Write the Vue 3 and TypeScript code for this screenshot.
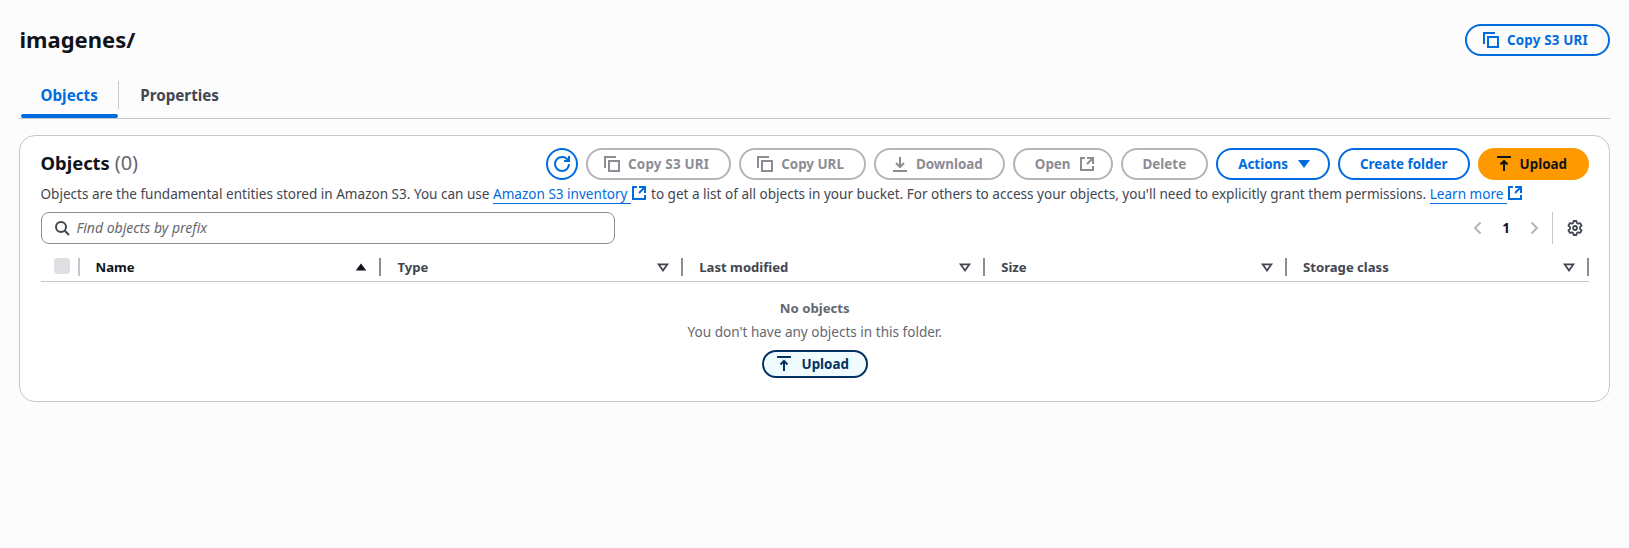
<template>
  <div class="page">
    <header class="page-head">
      <h1 class="title">imagenes/</h1>
      <button class="btn btn-normal btn-uri">
        <svg class="icon" viewBox="0 0 16 16"><path d="M1 12V1h11" /><path d="M5 5h10v10H5z" /></svg>
        Copy S3 URI
      </button>
    </header>

    <nav class="tabs">
      <div class="tab active"><span>Objects</span></div>
      <div class="tab"><span>Properties</span></div>
    </nav>

    <section class="card">
      <div class="card-head">
        <h2 class="card-title">Objects <span class="count">(0)</span></h2>
        <div class="actions">
          <button class="btn-round" aria-label="Refresh">
            <svg class="icon" viewBox="0 0 16 16">
              <path d="M10 5h5V0" />
              <path d="M15 8a6.96 6.96 0 0 1-7 7 6.96 6.96 0 0 1-7-7 6.96 6.96 0 0 1 7-7 6.87 6.87 0 0 1 6.3 4" />
            </svg>
          </button>
          <button class="btn btn-disabled btn-uri">
            <svg class="icon" viewBox="0 0 16 16"><path d="M1 12V1h11" /><path d="M5 5h10v10H5z" /></svg>
            Copy S3 URI
          </button>
          <button class="btn btn-disabled">
            <svg class="icon" viewBox="0 0 16 16"><path d="M1 12V1h11" /><path d="M5 5h10v10H5z" /></svg>
            Copy URL
          </button>
          <button class="btn btn-disabled">
            <svg class="icon" viewBox="0 0 16 16"><path d="M1 15h14" /><path d="M8 1v10" /><path d="m4 7 4 4 4-4" /></svg>
            Download
          </button>
          <button class="btn btn-disabled icon-right">
            Open
            <svg class="icon" viewBox="0 0 16 16">
              <path d="M14 8V2H8" /><path d="M14 2 8 8" /><path d="M6 2H2v12h12v-4" />
            </svg>
          </button>
          <button class="btn btn-disabled text-only">Delete</button>
          <button class="btn btn-normal icon-right">
            Actions
            <svg class="caret" viewBox="0 0 16 16"><path d="M2 4h12l-6 8z" /></svg>
          </button>
          <button class="btn btn-normal text-only">Create folder</button>
          <button class="btn btn-primary">
            <svg class="icon" viewBox="0 0 16 16"><path d="M1 1h14" /><path d="M8 15V5" /><path d="m4.500 8.500 3.500-3.500 3.500 3.500" /></svg>
            Upload
          </button>
        </div>
      </div>

      <p class="desc">
        Objects are the fundamental entities stored in Amazon S3. You can use
        <a class="link">Amazon S3 inventory</a>
        <svg class="icon ext" viewBox="0 0 16 16">
          <path d="M14 8V2H8" /><path d="M14 2 8 8" /><path d="M6 2H2v12h12v-4" />
        </svg>
        to get a list of all objects in your bucket. For others to access your objects, you'll need to explicitly grant them permissions.
        <a class="link">Learn more</a>
        <svg class="icon ext" viewBox="0 0 16 16">
          <path d="M14 8V2H8" /><path d="M14 2 8 8" /><path d="M6 2H2v12h12v-4" />
        </svg>
      </p>

      <div class="tools">
        <div class="search">
          <svg class="icon" viewBox="0 0 16 16"><circle cx="7" cy="7" r="5" /><path d="m15 15-4.500-4.500" /></svg>
          <span>Find objects by prefix</span>
        </div>
        <div class="pager">
          <svg class="icon" viewBox="0 0 16 16"><path d="m10.500 2.500-5.500 5.500 5.500 5.500" /></svg>
          <span class="page-num">1</span>
          <svg class="icon" viewBox="0 0 16 16"><path d="m5.500 2.500 5.500 5.500-5.500 5.500" /></svg>
        </div>
        <div class="prefs">
          <svg class="icon gear" viewBox="0 0 16 16">
            <circle cx="8" cy="8" r="2" />
            <path d="M6.600 1h2.800l.5 2 1.300.7 2-.6 1.400 2.500-1.500 1.400v2l1.500 1.400-1.400 2.500-2-.6-1.300.7-.5 2H6.600l-.5-2-1.300-.7-2 .6-1.400-2.500L2.900 9V7L1.400 5.600l1.400-2.500 2 .6 1.300-.7z" />
          </svg>
        </div>
      </div>

      <div class="table-head">
        <div class="check-col"><span class="checkbox"></span></div>
        <div v-for="col in columns" :key="col.label" class="col" :class="{ sorted: col.sorted }">
          <span>{{ col.label }}</span>
          <svg v-if="col.sorted" class="sort filled" viewBox="0 0 16 16"><path d="M2 12h12L8 4z" /></svg>
          <svg v-else class="sort" viewBox="0 0 16 16"><path d="M3 5h10l-5 7z" /></svg>
        </div>
      </div>

      <div class="empty">
        <strong>No objects</strong>
        <p>You don't have any objects in this folder.</p>
        <button class="btn btn-small">
          <svg class="icon" viewBox="0 0 16 16"><path d="M1 1h14" /><path d="M8 15V5" /><path d="m4.500 8.500 3.500-3.500 3.500 3.500" /></svg>
          Upload
        </button>
      </div>
    </section>
  </div>
</template>

<script setup lang="ts">
const columns = [
  { label: 'Name', sorted: true },
  { label: 'Type', sorted: false },
  { label: 'Last modified', sorted: false },
  { label: 'Size', sorted: false },
  { label: 'Storage class', sorted: false },
]
</script>

<style>
html,
body {
  background: #fcfcfc;
}
</style>

<style scoped>
.page {
  min-height: 548px;
  box-sizing: border-box;
  padding: 24px 19px 0;
  font-family: 'Noto Sans', sans-serif;
  font-size: 13.55px;
  line-height: 20px;
  color: #0f141a;
}

.page-head {
  display: flex;
  justify-content: space-between;
  align-items: center;
  height: 32px;
}

.title {
  margin: 0 0 2px 0.5px;
  font-size: 22px;
  line-height: 32px;
  font-weight: 700;
}

.icon {
  flex: none;
  width: 16px;
  height: 16px;
  fill: none;
  stroke: currentColor;
  stroke-width: 2;
}

.btn,
.btn-round {
  box-sizing: border-box;
  display: inline-flex;
  align-items: center;
  background: none;
  font: inherit;
  font-size: 13.4px;
  font-weight: 700;
  white-space: nowrap;
}

.btn {
  height: 32px;
  gap: 8px;
  padding: 0 20px 0 16px;
  border: 2px solid #006ce0;
  border-radius: 20px;
}

.btn.text-only {
  padding: 0 20px;
}

.btn.icon-right {
  padding: 0 16px 0 20px;
}

.btn-uri {
  letter-spacing: 0.2px;
}

.btn-normal {
  color: #006ce0;
}

.btn-disabled {
  color: #8c8c94;
  border-color: #b4b4bb;
}

.btn-primary {
  color: #0f141a;
  background: #ff9900;
  border-color: #ff9900;
}

.btn-small {
  height: 28px;
  gap: 10px;
  padding: 0 17px 0 12px;
  color: #033160;
  background: #f0fbff;
  border-color: #033160;
}

.btn-round {
  justify-content: center;
  width: 32px;
  height: 32px;
  padding: 0;
  color: #006ce0;
  border: 2px solid #006ce0;
  border-radius: 50%;
}

.caret {
  width: 16px;
  height: 16px;
  fill: currentColor;
}

.tabs {
  display: flex;
  height: 37px;
  margin-top: 25px;
  border-bottom: 1px solid #c6c6cd;
}

.tab {
  position: relative;
  display: flex;
  align-items: center;
  height: 28px;
  padding: 0 20px 0 21.500px;
  font-size: 15.2px;
  font-weight: 700;
  color: #424650;
}

.tab.active {
  color: #006ce0;
  border-right: 1px solid #c6c6cd;
}

.tab.active::after {
  content: '';
  position: absolute;
  left: 2px;
  right: 0;
  top: 33px;
  height: 4px;
  border-radius: 2px;
  background: #006ce0;
}

.card {
  margin-top: 16px;
  padding: 12px 20px 0 20.500px;
  height: 267px;
  box-sizing: border-box;
  background: #fff;
  border: 1px solid #c6c6cd;
  border-radius: 16px;
}

.card-head {
  display: flex;
  align-items: center;
  justify-content: space-between;
  height: 32px;
}

.card-title {
  margin: 0 0 2px;
  font-size: 18.4px;
  line-height: 24px;
  font-weight: 700;
}

.count {
  font-size: 20px;
  font-weight: 400;
  color: #656871;
}

.actions {
  display: flex;
  gap: 8px;
}

.desc {
  margin: 4px 0 0;
  color: #424650;
  white-space: nowrap;
}

.link {
  padding-right: 4px;
  color: #006ce0;
  border-bottom: 1px solid #006ce0;
}

.ext {
  color: #006ce0;
  vertical-align: -2px;
}

.tools {
  display: flex;
  align-items: center;
  height: 32px;
  margin-top: 8px;
}

.search {
  box-sizing: border-box;
  display: flex;
  align-items: center;
  gap: 7px;
  width: 574px;
  height: 32px;
  padding: 0 12px;
  color: #424650;
  background: #fff;
  border: 1px solid #8c8c94;
  border-radius: 8px;
}

.search span {
  font-size: 14px;
  font-style: italic;
  color: #656871;
}

.pager {
  display: flex;
  align-items: center;
  gap: 13px;
  margin-left: auto;
  color: #b4b4bb;
}

.page-num {
  width: 14px;
  text-align: center;
  font-weight: 700;
  color: #0f141a;
}

.prefs {
  display: flex;
  align-items: center;
  height: 32px;
  margin-left: 10px;
  padding: 0 6px 0 14px;
  color: #424650;
  border-left: 1px solid #c6c6cd;
}

.gear {
  stroke-width: 1.8;
  stroke-linejoin: round;
}

.table-head {
  display: grid;
  grid-template-columns: 39px repeat(5, 1fr);
  align-items: end;
  box-sizing: border-box;
  height: 34px;
  margin-top: 4px;
  padding-bottom: 5px;
  border-bottom: 1px solid #c6c6cd;
  font-size: 13.1px;
  font-weight: 700;
  color: #424650;
}

.check-col {
  display: flex;
  align-items: flex-start;
  height: 18px;
  padding-left: 13px;
  border-right: 2px solid #c6c6cd;
  box-sizing: border-box;
}

.checkbox {
  width: 16px;
  height: 16px;
  border-radius: 4px;
  background: #dedee3;
}

.col {
  display: flex;
  align-items: center;
  justify-content: space-between;
  box-sizing: border-box;
  height: 18px;
  padding: 0 11px 0 16px;
  border-right: 2px solid #8c8c94;
}

.col.sorted {
  color: #0f141a;
}

.sort {
  width: 14px;
  height: 14px;
  fill: none;
  stroke: #424650;
  stroke-width: 2;
}

.sort.filled {
  fill: #0f141a;
  stroke: none;
}

.empty {
  display: flex;
  flex-direction: column;
  align-items: center;
  padding-top: 16px;
  color: #656871;
}

.empty strong {
  font-size: 13.2px;
  font-weight: 700;
}

.empty p {
  margin: 4px 0 8px;
}
</style>
